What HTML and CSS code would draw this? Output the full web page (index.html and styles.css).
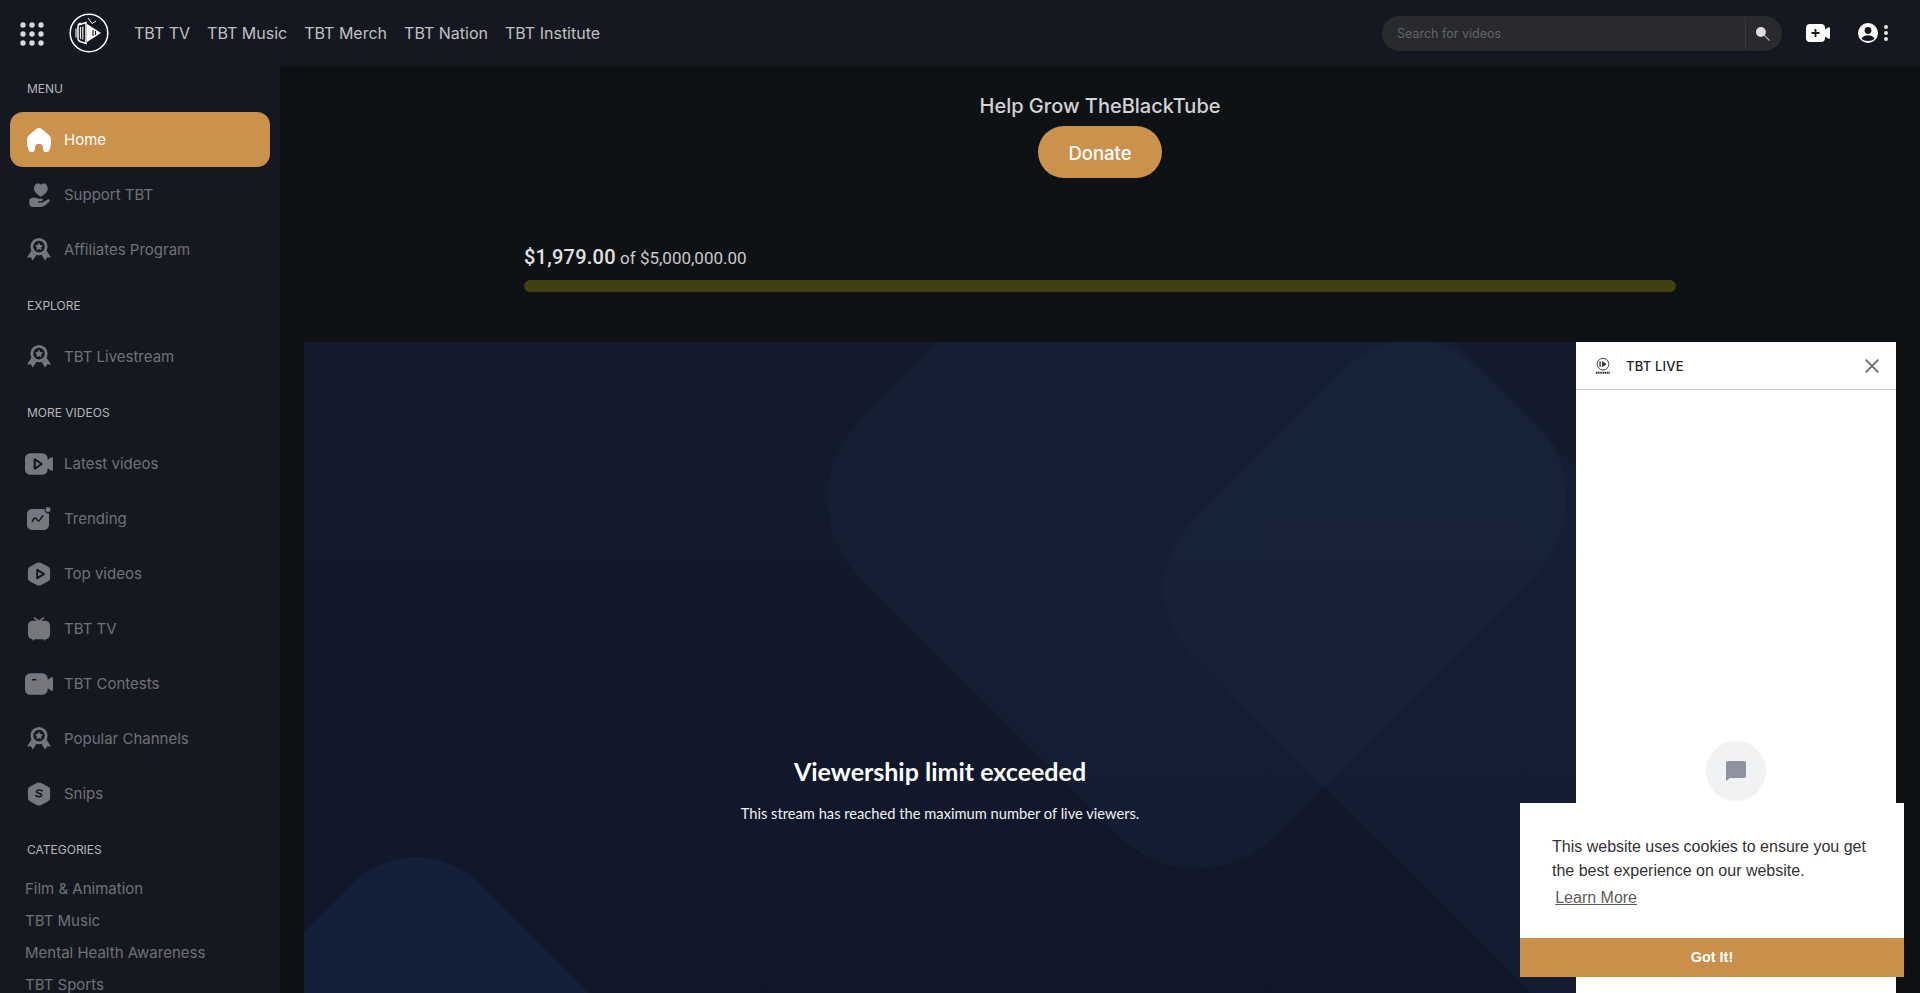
FILE: index.html
```html
<!DOCTYPE html>
<html lang="en">
<head>
<meta charset="utf-8">
<title>TheBlackTube</title>
<link rel="stylesheet" href="styles.css">
</head>
<body>
<svg class="defs" width="0" height="0" aria-hidden="true">
  <defs>
    <symbol id="medal" viewBox="0 0 24 24">
      <path d="M4.600 12.500 0 19.500l3.800-.2 2 3.200 3.600-5.500a9 9 0 0 1-4.800-4.500zM19.400 12.500l4.600 7-3.800-.2-2 3.200-3.600-5.500a9 9 0 0 0 4.800-4.500z"/>
      <path fill-rule="evenodd" d="M12 0a8.600 8.600 0 1 1 0 17.200A8.600 8.600 0 0 1 12 0zm0 2.800a5.800 5.800 0 1 0 0 11.600 5.800 5.800 0 0 0 0-11.600zm0 1.700 1.300 2.600 2.800.4-2 2 .5 2.800-2.600-1.300-2.600 1.300.5-2.800-2-2 2.800-.4z"/>
    </symbol>
    <symbol id="tvlogo" viewBox="0 0 40 40">
      <circle cx="20" cy="20" r="18.800" fill="none" stroke="#fff" stroke-width="1.500"/>
      <path d="M11 11.500 17 9.500v21l-6-2c-1.500-.5-2-1.500-2-3v-12c0-1.500.5-2.500 2-3z" fill="none" stroke="#fff" stroke-width="1.500"/>
      <path d="M18 11 32 20 18 29z" fill="#fff"/>
      <path d="M24 17v6M26.500 18v4" stroke="#161821" stroke-width="1.200"/>
      <path d="M7 15.500v9M11.500 14v12M13.800 13.500v13" stroke="#e8e8e8" stroke-width="1.200"/>
      <path d="M19 5l4 5.500 4-2.500" stroke="#fff" stroke-width="1" fill="none"/>
    </symbol>
  </defs>
</svg>

<header class="topbar">
  <div class="topbar-left">
    <svg class="apps" viewBox="0 0 24 24" width="24" height="24" aria-hidden="true">
      <circle cx="3" cy="3" r="2.700"/><circle cx="12" cy="3" r="2.700"/><circle cx="21" cy="3" r="2.700"/>
      <circle cx="3" cy="12" r="2.700"/><circle cx="12" cy="12" r="2.700"/><circle cx="21" cy="12" r="2.700"/>
      <circle cx="3" cy="21" r="2.700"/><circle cx="12" cy="21" r="2.700"/><circle cx="21" cy="21" r="2.700"/>
    </svg>
    <svg class="logo" width="40" height="40" aria-hidden="true"><use href="#tvlogo"/></svg>
    <nav class="topnav">
      <a>TBT TV</a><a>TBT Music</a><a>TBT Merch</a><a>TBT Nation</a><a>TBT Institute</a>
    </nav>
  </div>
  <div class="topbar-right">
    <div class="search">
      <span class="search-text">Search for videos</span>
      <span class="search-btn">
        <svg viewBox="0 0 16 16" width="15" height="15" aria-hidden="true">
          <path d="m10 10 5.500 5.500" stroke="#bdbdbd" stroke-width="1.200" fill="none"/>
          <circle cx="6.300" cy="6.300" r="5.300" fill="#dedede"/>
        </svg>
      </span>
    </div>
    <svg class="cam" viewBox="0 0 24 18" width="24" height="18" aria-hidden="true">
      <path d="M4 0h11a4 4 0 0 1 4 4v1.500l3-2c1-.6 2-.1 2 1v9c0 1.100-1 1.600-2 1l-3-2V14a4 4 0 0 1-4 4H4a4 4 0 0 1-4-4V4a4 4 0 0 1 4-4z" fill="#fff"/>
      <path d="M9.500 5v8M5.500 9h8" stroke="#161821" stroke-width="1.800"/>
    </svg>
    <div class="account">
      <svg viewBox="0 0 20 20" width="20" height="20" aria-hidden="true">
        <circle cx="10" cy="10" r="10" fill="#fff"/>
        <circle cx="10" cy="7.500" r="3.400" fill="#161821"/>
        <path d="M3.500 15.500c1.500-2.500 4-3.300 6.500-3.300s5 .8 6.500 3.300C15 17.300 12.500 18 10 18s-5-.7-6.500-2.500z" fill="#161821"/>
      </svg>
      <svg viewBox="0 0 4 16" width="4" height="16" aria-hidden="true">
        <circle cx="2" cy="2" r="2" fill="#e4e4e4"/><circle cx="2" cy="8" r="2" fill="#e4e4e4"/><circle cx="2" cy="14" r="2" fill="#e4e4e4"/>
      </svg>
    </div>
  </div>
</header>

<div class="layout">
  <aside class="sidebar">
    <h3 class="side-label first">MENU</h3>
    <a class="side-item active">
      <svg class="ic" viewBox="0 0 24 24" aria-hidden="true"><path d="M12 0c1 0 2 .5 3 1.300l6 5c2 1.700 3 3.500 3 6.200 0 4-.5 7-1.500 9.500-.5 1.200-1.500 2-3 2h-1c-1.500 0-2-1-2.300-2.500-.2-2-.3-5-2.700-5.500h-3c-2.400.5-2.500 3.500-2.700 5.500C7.500 23 7 24 5.500 24h-1c-1.500 0-2.500-.8-3-2C.5 19.500 0 16.500 0 12.500c0-2.700 1-4.500 3-6.200l6-5C10 .5 11 0 12 0z"/></svg>
      <span>Home</span>
    </a>
    <a class="side-item">
      <svg class="ic" viewBox="0 0 24 26" aria-hidden="true"><path d="M14 15c-5-3-7.500-5.500-7.500-9 0-3.300 2.200-5.500 4.500-5.500 1.200 0 2.300.5 3 1.300.7-.8 1.800-1.300 3-1.300 2.300 0 4.500 2.200 4.500 5.500 0 3.500-2.500 6-7.500 9z"/><path d="M1.500 17.500c2-1.500 4-2 6-1.500l4.500 1h3c1.200 0 1.700 1.200.8 2l-1 .7H11v1.300h5l5.500-3.300c1.500-.7 3 1 1.700 2.300C20 23.500 17 26 12 26H5.500c-2.800 0-4-1.500-4-4.500z"/></svg>
      <span>Support TBT</span>
    </a>
    <a class="side-item">
      <svg class="ic" aria-hidden="true"><use href="#medal"/></svg>
      <span>Affiliates Program</span>
    </a>

    <h3 class="side-label">EXPLORE</h3>
    <a class="side-item">
      <svg class="ic" aria-hidden="true"><use href="#medal"/></svg>
      <span>TBT Livestream</span>
    </a>

    <h3 class="side-label">MORE VIDEOS</h3>
    <a class="side-item">
      <svg class="ic wide" viewBox="0 0 26 20" aria-hidden="true"><path fill-rule="evenodd" d="M5 0h11a5 5 0 0 1 5 5v1l3-2c1-.6 2 0 2 1v10c0 1-1 1.600-2 1l-3-2v1a5 5 0 0 1-5 5H5a5 5 0 0 1-5-5V5a5 5 0 0 1 5-5zm3 6v8c0 1 1 1.400 1.800 1l6-4c.8-.5.8-1.500 0-2l-6-4C9 4.600 8 5 8 6zm2 1.500L14 10l-4 2.500z"/></svg>
      <span>Latest videos</span>
    </a>
    <a class="side-item">
      <svg class="ic" viewBox="0 0 24 24" aria-hidden="true"><path fill-rule="evenodd" d="M5 2h12.500a4 4 0 0 0 4.500 4.500V18a5 5 0 0 1-5 5H5a5 5 0 0 1-5-5V7a5 5 0 0 1 5-5z"/><circle cx="21" cy="2.500" r="2.500"/><path d="M5 15c1-2.500 2-4 3.500-4s1.500 3 3 3 2.500-4 5-5.500" fill="none" stroke="#161821" stroke-width="1.500"/></svg>
      <span>Trending</span>
    </a>
    <a class="side-item">
      <svg class="ic" viewBox="0 0 24 26" aria-hidden="true"><path fill-rule="evenodd" d="M9.500 1.200a5 5 0 0 1 5 0l7 3.600a4 4 0 0 1 2.500 3.700v9a4 4 0 0 1-2.500 3.700l-7 3.600a5 5 0 0 1-5 0l-7-3.600A4 4 0 0 1 0 17.500v-9a4 4 0 0 1 2.500-3.700zM9 8.500v9c0 1 1 1.500 1.800 1l7-4.500c.7-.5.7-1.500 0-2l-7-4.500C10 7 9 7.500 9 8.500zm2 2 4.500 2.500-4.500 2.500z"/></svg>
      <span>Top videos</span>
    </a>
    <a class="side-item">
      <svg class="ic" viewBox="0 0 24 26" aria-hidden="true"><path d="M7 0l5 3.500L17 0l1 1-3.500 3H18c4 0 6 2 6 6v8c0 4-2 6-5 6l-.5 2-2-2h-9l-2 2L5 24c-3 0-5-2-5-6v-8c0-4 2-6 6-6h3.500L6 1z"/></svg>
      <span>TBT TV</span>
    </a>
    <a class="side-item">
      <svg class="ic wide" viewBox="0 0 26 20" aria-hidden="true"><path d="M5 0h11a5 5 0 0 1 5 5v1l3-2c1-.6 2 0 2 1v10c0 1-1 1.600-2 1l-3-2v1a5 5 0 0 1-5 5H5a5 5 0 0 1-5-5V5a5 5 0 0 1 5-5z"/><path d="M6.500 6h4" stroke="#161821" stroke-width="1.500"/></svg>
      <span>TBT Contests</span>
    </a>
    <a class="side-item">
      <svg class="ic" aria-hidden="true"><use href="#medal"/></svg>
      <span>Popular Channels</span>
    </a>
    <a class="side-item">
      <svg class="ic" viewBox="0 0 24 26" aria-hidden="true"><path d="M9.500 1.200a5 5 0 0 1 5 0l7 3.600a4 4 0 0 1 2.500 3.700v9a4 4 0 0 1-2.500 3.700l-7 3.600a5 5 0 0 1-5 0l-7-3.600A4 4 0 0 1 0 17.500v-9a4 4 0 0 1 2.500-3.700z"/><path d="M16 10c-1-1.500-6-2-6.700 0-.6 2.500 6 1.800 5.600 4.500-.4 2-5.600 1.700-6.900-.2" fill="none" stroke="#161821" stroke-width="1.700"/></svg>
      <span>Snips</span>
    </a>

    <h3 class="side-label cats">CATEGORIES</h3>
    <ul class="cat-list">
      <li>Film &amp; Animation</li>
      <li>TBT Music</li>
      <li>Mental Health Awareness</li>
      <li>TBT Sports</li>
    </ul>
  </aside>

  <main class="main">
    <section class="donate-box">
      <h2 class="donate-title">Help Grow TheBlackTube</h2>
      <a class="donate-btn">Donate</a>
    </section>
    <section class="progress">
      <p class="progress-label"><strong>$1,979.00</strong> of $5,000,000.00</p>
      <div class="progress-bar"></div>
    </section>
    <section class="stream">
      <div class="player">
        <svg class="player-bg" viewBox="0 0 1272 651" aria-hidden="true">
          <rect class="shape" width="587" height="587" rx="110" transform="translate(893 -258) rotate(45)"/>
          <rect class="shape" width="800" height="403" rx="90" transform="translate(1107 -39) rotate(45)"/>
          <rect class="shape-c" width="520" height="520" rx="90" transform="translate(112 478) rotate(45)"/>
        </svg>
        <div class="player-msg">
          <h2>Viewership limit exceeded</h2>
          <p>This stream has reached the maximum number of live viewers.</p>
        </div>
      </div>
      <aside class="chat">
        <div class="chat-head">
          <svg class="chat-logo" viewBox="0 0 20 20" width="18" height="18" aria-hidden="true">
            <circle cx="10" cy="8" r="6.500" fill="none" stroke="#333" stroke-width="1"/>
            <path d="M9 4.500 14 8l-5 3.500zM6 5h1.500v6H6z" fill="#333"/>
            <path d="M2 17.500h16" stroke="#333" stroke-width="2" stroke-dasharray="1.500 .5"/>
          </svg>
          <span class="chat-title">TBT LIVE</span>
          <svg class="chat-close" viewBox="0 0 14 14" width="14" height="14" aria-hidden="true">
            <path d="M.7.700l12.600 12.600M13.300.700.700 13.300" stroke="#666" stroke-width="1.700"/>
          </svg>
        </div>
        <div class="chat-body">
          <span class="chat-bubble">
            <svg viewBox="0 0 20 20" width="20" height="20" aria-hidden="true">
              <path d="M2 0h16a2 2 0 0 1 2 2v13a2 2 0 0 1-2 2H4l-4 3V2a2 2 0 0 1 2-2z" fill="#8f93a1"/>
            </svg>
          </span>
        </div>
      </aside>
    </section>
  </main>
</div>

<div class="cookie">
  <div class="cookie-msg">
    This website uses cookies to ensure you get the best experience on our website.
    <a class="cookie-link">Learn More</a>
  </div>
  <a class="cookie-btn">Got It!</a>
</div>
</body>
</html>
```
FILE: styles.css
```css
* { box-sizing: border-box; }
html, body { margin: 0; height: 993px; overflow: hidden; }
body {
  background: #0f1215;
  color: #fff;
  font-family: Inter, "Liberation Sans", sans-serif;
  display: flex;
  flex-direction: column;
}
.defs { position: absolute; }

/* top bar */
.topbar {
  height: 66px;
  flex: none;
  background: #161821;
  display: flex;
  align-items: center;
  justify-content: space-between;
  padding: 0 32px 0 20px;
}
.topbar-left, .topbar-right { display: flex; align-items: center; }
.apps { fill: #d8d8d8; margin-right: 25px; margin-top: 2px; }
.logo { margin-right: 25px; }
.topnav { display: flex; gap: 17px; }
.topnav a { font-size: 16px; color: #bfc0c3; line-height: 20px; }
.search {
  width: 400px;
  height: 35px;
  border-radius: 18px;
  background: #282a2d;
  display: flex;
  align-items: center;
  justify-content: space-between;
  padding-left: 15px;
  margin-right: 24px;
}
.search-text { font-size: 12.500px; color: #636466; }
.search-btn {
  width: 37px;
  height: 31px;
  border-left: 1px solid #36383b;
  padding-right: 4px;
  display: flex;
  align-items: center;
  justify-content: center;
}
.cam { margin-right: 28px; }
.account { display: flex; align-items: center; gap: 6px; }

/* layout */
.layout { flex: 1; min-height: 0; display: flex; }
.sidebar {
  width: 280px;
  flex: none;
  overflow: hidden;
  background: #161821;
  padding-right: 10px;
}
.side-label {
  margin: 0;
  padding: 17px 0 0 27px;
  height: 52px;
  font-size: 12px;
  line-height: 24px;
  font-weight: 400;
  color: #b4b5b8;
}
.side-label.first { padding-top: 11px; height: 46px; }
.side-label.cats { height: 52px; }
.side-item {
  display: flex;
  align-items: center;
  height: 55px;
  margin-left: 10px;
  padding-left: 15px;
  border-radius: 13px;
  font-size: 15px;
  color: #707176;
  gap: 11px;
}
.side-item .ic { width: 28px; height: 24px; fill: #77787d; flex: none; }
.side-item.active { background: #ca924c; color: #fff; }
.side-item.active .ic { fill: #fff; }
.cat-list { list-style: none; margin: 0; padding: 0 0 0 25px; }
.cat-list li { height: 32px; line-height: 32px; font-size: 15px; color: #707176; }

/* main */
.main { flex: 1; min-width: 0; padding: 26px 24px 0; }
.donate-box { display: flex; flex-direction: column; align-items: center; }
.donate-title { margin: 0 0 6px; font-size: 20px; line-height: 28px; font-weight: 500; color: #d2d3d5; }
.donate-btn {
  width: 124px;
  height: 52px;
  border-radius: 26px;
  background: #ca924c;
  color: #fff;
  font-size: 18.500px;
  font-weight: 500;
  line-height: 54px;
  text-align: center;
}
.progress { width: 1152px; margin: 67px auto 50px; }
.progress-label {
  margin: 0 0 11px;
  height: 24px;
  line-height: 24px;
  font-family: Roboto, sans-serif;
  font-size: 17px;
  color: #c9cacc;
}
.progress-label strong { font-size: 20px; letter-spacing: .25px; font-weight: 500; color: #e2e2e4; }
.progress-bar { height: 12px; border-radius: 6px; background: #434010; }

.stream { display: flex; height: 651px; }
.player {
  position: relative;
  flex: 1;
  overflow: hidden;
  background: linear-gradient(180deg, #121a2c, #11172a);
  display: flex;
  align-items: flex-start;
  justify-content: center;
}
.player-bg { position: absolute; left: 0; top: 0; width: 1272px; height: 651px; }
.shape { fill: rgba(32, 52, 78, .22); }
.shape-c { fill: rgba(30, 50, 90, .3); }
.player-msg { position: relative; margin-top: 412px; text-align: center; font-family: Lato, sans-serif; }
.player-msg h2 { margin: 0 0 15px; font-size: 25px; line-height: 34px; font-weight: 700; }
.player-msg p { margin: 0; font-size: 14.700px; line-height: 20px; color: #f0f1f3; }

.chat { width: 320px; flex: none; background: #fff; display: flex; flex-direction: column; }
.chat-head {
  height: 48px;
  flex: none;
  border-bottom: 1px solid #ccc;
  display: flex;
  align-items: center;
  padding: 0 17px 0 18px;
}
.chat-title { margin-left: 14px; flex: 1; font-size: 13px; font-weight: 500; letter-spacing: .2px; color: #222; }
.chat-body { flex: 1; display: flex; justify-content: center; align-items: flex-start; padding-top: 351px; }
.chat-bubble {
  width: 60px;
  height: 60px;
  border-radius: 50%;
  background: #f1f2f4;
  display: flex;
  align-items: center;
  justify-content: center;
}

/* cookie notice */
.cookie {
  position: fixed;
  left: 1520px;
  top: 803px;
  width: 384px;
  height: 174px;
  background: #fff;
  font-family: "Liberation Sans", Arial, sans-serif;
  color: #333;
  display: flex;
  flex-direction: column;
  justify-content: space-between;
}
.cookie-msg { padding: 32px 32px 0; font-size: 16px; line-height: 24px; }
.cookie-link { display: inline-block; padding: .2em; text-decoration: underline; opacity: .8; line-height: 24px; }
.cookie-btn {
  height: 39px;
  background: #c98f4b;
  color: #fff;
  font-size: 14.400px;
  font-weight: 700;
  line-height: 39px;
  text-align: center;
}
```
